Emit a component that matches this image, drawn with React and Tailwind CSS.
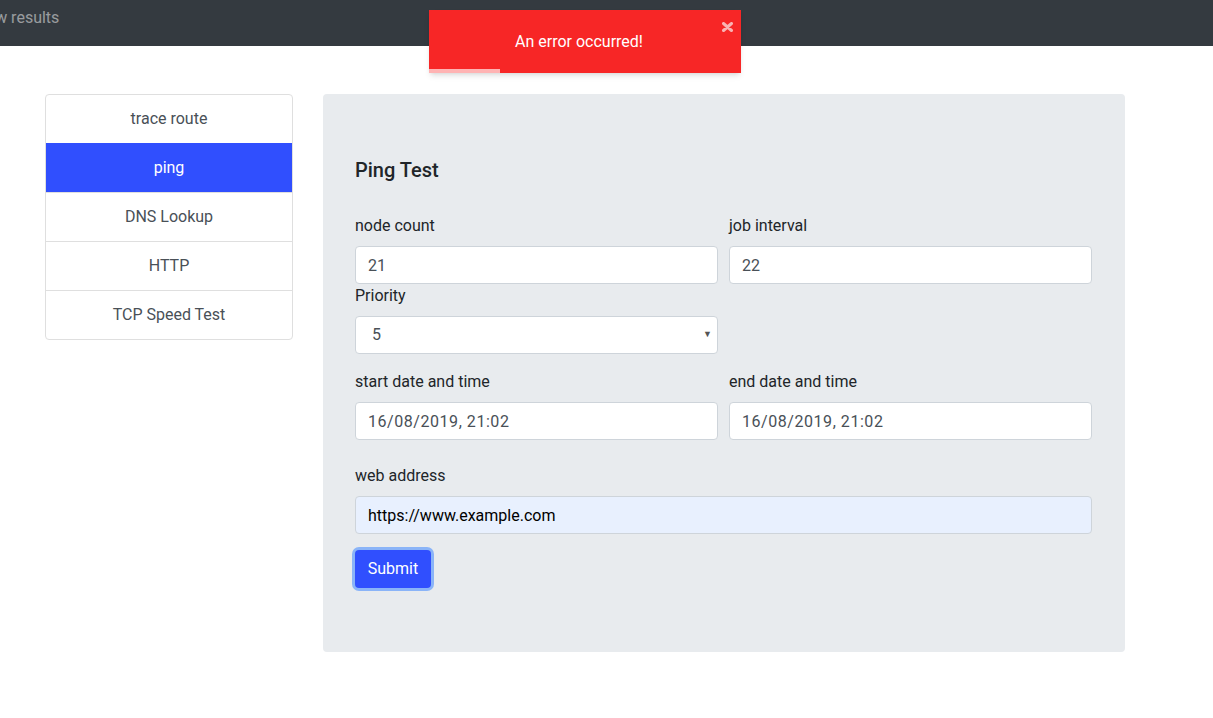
import React from 'react';

const tests = ['trace route', 'ping', 'DNS Lookup', 'HTTP', 'TCP Speed Test'];

function Field({ label, value, className = '', inputClass = '' }) {
  return (
    <div className={className}>
      <label className="block mb-2 leading-6 text-[#212529]">{label}</label>
      <input
        readOnly
        value={value}
        className={'block w-full h-[38px] px-3 bg-white border border-[#ced4da] rounded text-[#495057] outline-none ' + inputClass}
      />
    </div>
  );
}

export default function App() {
  return (
    <div className="min-h-[718px] bg-white text-base" style={{ fontFamily: 'Roboto, "Liberation Sans", sans-serif' }}>
      {/* Navbar */}
      <nav className="h-[46px] bg-[#343a40] flex items-center overflow-hidden">
        <span className="ml-[-25px] mb-[10px] text-white/50">view results</span>
      </nav>

      {/* Error toast */}
      <div className="absolute top-[10px] left-[429px] w-[312px] h-[63px] bg-[#f72626] shadow-md overflow-hidden">
        <div className="h-full flex items-center justify-center pr-[12px] text-white">An error occurred!</div>
        <svg className="absolute top-[12px] right-[8px]" width="11" height="10" viewBox="0 0 11 10">
          <path d="M1.5 1.5 L9.5 8.5 M9.5 1.5 L1.5 8.5" stroke="#f9b3b3" strokeWidth="3" strokeLinecap="round" />
        </svg>
        <div className="absolute bottom-0 left-0 h-[4px] w-[71px] bg-[#ffb3b3]" />
      </div>

      <div className="flex items-start gap-[30px] pl-[45px] pt-[48px]">
        {/* Test list */}
        <div className="w-[248px] bg-white border border-[#dfdfdf] rounded overflow-hidden">
          {tests.map((t, i) => (
            <div
              key={t}
              className={
                'flex items-center justify-center ' +
                (i === 0 ? 'h-[48px] ' : 'h-[49px] ') +
                (i === 1 ? 'bg-[#304ffe] text-white' : 'text-[#495057]') +
                (i > 1 ? ' border-t border-[#dfdfdf]' : '')
              }
            >
              {t}
            </div>
          ))}
        </div>

        {/* Form panel */}
        <div className="w-[802px] bg-[#e8ebee] rounded px-8 pt-[64px] pb-[64px]">
          <h4 className="text-xl font-medium leading-6 text-[#212529] mb-[32px]">Ping Test</h4>

          <div className="grid grid-cols-2 gap-x-[11px] w-[737px]">
            <Field label="node count" value="21" />
            <Field label="job interval" value="22" />

            <div>
              <label className="block mb-2 leading-6 text-[#212529]">Priority</label>
              <div className="h-[38px] pl-4 pr-3 bg-white border border-[#ced4da] rounded text-[#495057] flex items-center justify-between">
                <span>5</span>
                <span className="text-[9px] text-[#555] mr-[-7px]">▼</span>
              </div>
            </div>
            <div />

            <Field label="start date and time" value="16/08/2019, 21:02" className="mt-4" inputClass="tracking-[0.55px]" />
            <Field label="end date and time" value="16/08/2019, 21:02" className="mt-4" inputClass="tracking-[0.55px]" />
          </div>

          <div className="mt-6 w-[737px]">
            <label className="block mb-2 leading-6 text-[#212529]">web address</label>
            <input
              readOnly
              value="https://www.example.com"
              className="block w-full h-[38px] px-3 bg-[#e8f0fe] border border-[#ced4da] rounded text-black outline-none"
            />
          </div>

          <button className="mt-4 h-[38px] w-[76px] bg-[#304ffe] text-white rounded ring-[3px] ring-[#8ab4f8]">
            Submit
          </button>
        </div>
      </div>
    </div>
  );
}
